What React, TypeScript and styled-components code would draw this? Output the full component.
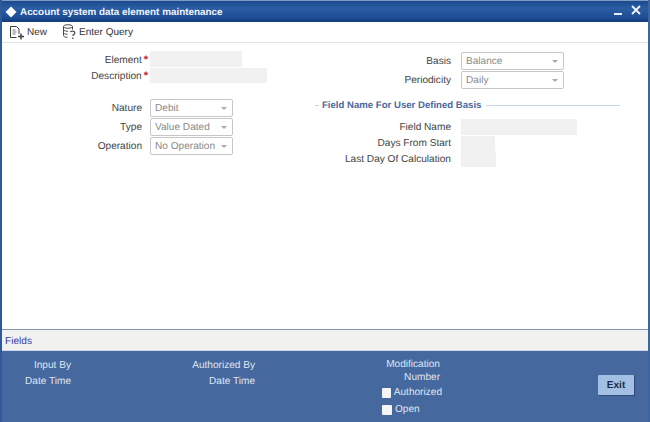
import React from 'react';
import styled, { createGlobalStyle } from 'styled-components';

const GlobalStyle = createGlobalStyle`
  html, body {
    margin: 0;
    padding: 0;
    background: #ffffff;
    font-family: "Liberation Sans", Arial, sans-serif;
    text-rendering: geometricPrecision;
  }
`;

const Window = styled.div`
  width: 650px;
  height: 422px;
  box-sizing: border-box;
  display: flex;
  flex-direction: column;
  background: #ffffff;
  border-left: 2px solid #2f5a98;
  border-right: 2px solid #3f659f;
  overflow: hidden;
`;

const TitleBar = styled.div`
  height: 22px;
  flex: none;
  margin: 0 -2px;
  padding: 0 9px 0 5px;
  display: flex;
  align-items: center;
  gap: 3px;
  color: #f2f5fa;
  font-size: 9.9px;
  font-weight: 700;
  background: linear-gradient(#1c4a8e 0%, #2a5da3 35%, #1f4f94 75%, #123c7c 100%);
  border-top: 1px solid #7f9cc4;
  box-sizing: border-box;
`;

const Title = styled.span`
  flex: 1;
  padding-top: 2px;
`;

const WindowButtons = styled.div`
  display: flex;
  align-items: center;
  gap: 9px;
  padding-bottom: 3px;
`;

const Toolbar = styled.div`
  height: 21px;
  flex: none;
  box-sizing: border-box;
  padding: 0 0 0 7px;
  display: flex;
  align-items: center;
  gap: 15px;
  border-bottom: 1px solid #e1e3e6;
`;

const ToolButton = styled.div`
  display: flex;
  align-items: center;
  gap: 2px;
  font-size: 10px;
  color: #333333;
`;

const Form = styled.div`
  flex: 1;
  display: grid;
  grid-template-columns: 310px 1fr;
  align-items: start;
  padding-top: 8px;
`;

const Column = styled.div`
  display: flex;
  flex-direction: column;
`;

const Row = styled.div<{ $labelWidth: number; $height: number; $gap: number }>`
  display: grid;
  grid-template-columns: ${(p) => p.$labelWidth}px 1fr;
  column-gap: ${(p) => p.$gap}px;
  align-items: center;
  height: ${(p) => p.$height}px;
`;

const Label = styled.div`
  text-align: right;
  padding-top: 1px;
  font-size: 10.1px;
  color: #444444;
  white-space: nowrap;
`;

const Required = styled.span`
  color: #c8202c;
  font-weight: 700;
  font-size: 11px;
  margin-left: 2px;
  margin-right: -6px;
`;

const TextBox = styled.div<{ $width: number; $height: number }>`
  width: ${(p) => p.$width}px;
  height: ${(p) => p.$height}px;
  background: #f1f1f1;
`;

const SelectBox = styled.div<{ $width: number }>`
  width: ${(p) => p.$width}px;
  height: 18px;
  box-sizing: border-box;
  border: 1px solid #c6c6c6;
  border-radius: 2px;
  background: #ffffff;
  padding: 1px 5px 0 4px;
  display: flex;
  align-items: center;
  justify-content: space-between;
  font-size: 10.1px;
  color: #8a8a8a;
`;

const Caret = styled.span`
  width: 0;
  height: 0;
  border-left: 3px solid transparent;
  border-right: 3px solid transparent;
  border-top: 3px solid #a9a9a9;
`;

const LeftSpacer = styled.div`
  height: 15.5px;
`;

const RightColumn = styled(Column)`
  padding-right: 28px;
`;

const SectionHeading = styled.div`
  display: flex;
  align-items: center;
  margin: 11px 0 7px 0;
  gap: 3px;
  font-size: 9.6px;
  font-weight: 700;
  color: #4a6a9c;
  white-space: nowrap;
  &::before {
    content: '';
    width: 4px;
    height: 1px;
    margin-left: 3px;
    background: #c9d6ea;
  }
  &::after {
    content: '';
    flex: 1;
    height: 1px;
    margin-left: 2px;
    background: #c9d6ea;
  }
`;

const FieldsBar = styled.div`
  height: 22px;
  flex: none;
  box-sizing: border-box;
  padding: 2px 0 0 3px;
  display: flex;
  align-items: center;
  font-size: 10.1px;
  color: #3a3a9c;
  background: #f1f1ef;
  border-top: 1px solid #8593b0;
  border-bottom: 1px solid #cdd9e8;
`;

const Footer = styled.div`
  height: 71px;
  flex: none;
  box-sizing: border-box;
  margin: 0 -2px;
  background: #45689f;
  display: grid;
  grid-template-columns: 71px 184px 185px 1fr;
  padding-top: 7px;
  color: #dfe6f2;
  font-size: 10.1px;
`;

const FooterColumn = styled.div`
  display: flex;
  flex-direction: column;
  align-items: flex-end;
`;

const FooterLine = styled.div<{ $height: number }>`
  height: ${(p) => p.$height}px;
  display: flex;
  align-items: center;
  white-space: nowrap;
`;

const CheckRow = styled.div`
  height: 17px;
  width: 60px;
  margin-right: -2px;
  display: flex;
  align-items: center;
  gap: 3px;
  flex: none;
`;

const CheckBox = styled.span`
  width: 10px;
  height: 10px;
  background: #f4f4f4;
  border-radius: 1px;
`;

const ExitCell = styled.div`
  display: flex;
  justify-content: flex-end;
  padding: 17px 16px 0 0;
`;

const ExitButton = styled.div`
  width: 36px;
  height: 20px;
  display: flex;
  align-items: center;
  justify-content: center;
  background: #a3bfe4;
  color: #1a2b44;
  font-size: 10.1px;
  font-weight: 700;
  border-radius: 1px;
  box-shadow: 1px 1px 1px #2f4a75;
`;

function NewIcon() {
  return (
    <svg width="16" height="15" viewBox="0 0 16 15" fill="none" stroke="#3c3c3c" strokeWidth="1">
      <path d="M1.5 1.5h6l2.5 2.5v5M1.5 1.5v11h6" />
      <path d="M3.5 5h3M3.5 7h4M3.5 9h3" stroke="#777777" />
      <path d="M12 8.5v6M9 11.5h6" strokeWidth="1.4" />
    </svg>
  );
}

function QueryIcon() {
  return (
    <svg width="15" height="16" viewBox="0 0 15 16" fill="none" stroke="#4a4a4a" strokeWidth="1">
      <ellipse cx="6" cy="2.5" rx="4.5" ry="1.8" />
      <path d="M1.5 2.5v9c0 1 1.5 1.8 4 1.8M10.5 2.5v3M1.5 5.5c0 1 2 1.8 4.5 1.8M1.5 8.5c0 1 1.5 1.8 4 1.8" />
      <path d="M8.5 8.2c.3-1.5 4.3-1.5 4.3.7 0 1.6-2 1.5-2 3.2M10.8 13.5v1.5" strokeWidth="1.3" />
    </svg>
  );
}

function DiamondIcon() {
  return (
    <svg width="12" height="12" viewBox="0 0 12 12">
      <path d="M6 .5L11.5 6 6 11.5.5 6z" fill="#ffffff" />
    </svg>
  );
}

function MinimizeIcon() {
  return (
    <svg width="8" height="10" viewBox="0 0 8 10">
      <path d="M0 8h8v2H0z" fill="#e8edf5" />
    </svg>
  );
}

function CloseIcon() {
  return (
    <svg width="10" height="10" viewBox="0 0 10 10">
      <path d="M1 1l8 8M9 1l-8 8" stroke="#f2f5fa" strokeWidth="1.8" />
    </svg>
  );
}

export default function App() {
  return (
    <>
      <GlobalStyle />
      <Window>
        <TitleBar>
          <DiamondIcon />
          <Title>Account system data element maintenance</Title>
          <WindowButtons>
            <MinimizeIcon />
            <CloseIcon />
          </WindowButtons>
        </TitleBar>
        <Toolbar>
          <ToolButton>
            <NewIcon />
            New
          </ToolButton>
          <ToolButton>
            <QueryIcon />
            Enter Query
          </ToolButton>
        </Toolbar>
        <Form>
          <Column>
            <Row $labelWidth={140} $height={16} $gap={8}>
              <Label>
                Element<Required>*</Required>
              </Label>
              <TextBox $width={92} $height={16} />
            </Row>
            <Row $labelWidth={140} $height={16} $gap={8}>
              <Label>
                Description<Required>*</Required>
              </Label>
              <TextBox $width={117} $height={15} />
            </Row>
            <LeftSpacer />
            <Row $labelWidth={140} $height={19} $gap={8}>
              <Label>Nature</Label>
              <SelectBox $width={83}>
                Debit
                <Caret />
              </SelectBox>
            </Row>
            <Row $labelWidth={140} $height={19} $gap={8}>
              <Label>Type</Label>
              <SelectBox $width={83}>
                Value Dated
                <Caret />
              </SelectBox>
            </Row>
            <Row $labelWidth={140} $height={19} $gap={8}>
              <Label>Operation</Label>
              <SelectBox $width={83}>
                No Operation
                <Caret />
              </SelectBox>
            </Row>
          </Column>
          <RightColumn>
            <Row $labelWidth={139} $height={19} $gap={10}>
              <Label>Basis</Label>
              <SelectBox $width={103}>
                Balance
                <Caret />
              </SelectBox>
            </Row>
            <Row $labelWidth={139} $height={19} $gap={10}>
              <Label>Periodicity</Label>
              <SelectBox $width={103}>
                Daily
                <Caret />
              </SelectBox>
            </Row>
            <SectionHeading>Field Name For User Defined Basis</SectionHeading>
            <Row $labelWidth={139} $height={17} $gap={10}>
              <Label>Field Name</Label>
              <TextBox $width={116} $height={16} />
            </Row>
            <Row $labelWidth={139} $height={16} $gap={10}>
              <Label>Days From Start</Label>
              <TextBox $width={34} $height={15} />
            </Row>
            <Row $labelWidth={139} $height={16} $gap={10}>
              <Label>Last Day Of Calculation</Label>
              <TextBox $width={35} $height={16} />
            </Row>
          </RightColumn>
        </Form>
        <FieldsBar>Fields</FieldsBar>
        <Footer>
          <FooterColumn>
            <FooterLine $height={15}>Input By</FooterLine>
            <FooterLine $height={16}>Date Time</FooterLine>
          </FooterColumn>
          <FooterColumn>
            <FooterLine $height={15}>Authorized By</FooterLine>
            <FooterLine $height={16}>Date Time</FooterLine>
          </FooterColumn>
          <FooterColumn>
            <FooterLine $height={13}>Modification</FooterLine>
            <FooterLine $height={13}>Number</FooterLine>
            <CheckRow>
              <CheckBox />
              Authorized
            </CheckRow>
            <CheckRow>
              <CheckBox />
              Open
            </CheckRow>
          </FooterColumn>
          <ExitCell>
            <ExitButton>Exit</ExitButton>
          </ExitCell>
        </Footer>
      </Window>
    </>
  );
}
